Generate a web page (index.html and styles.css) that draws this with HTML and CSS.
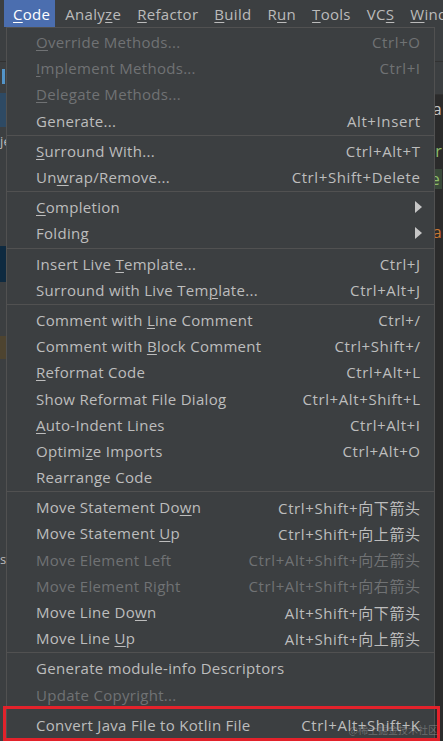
FILE: index.html
```html
<!DOCTYPE html>
<html lang="en">
<head>
<meta charset="utf-8">
<title>Code menu</title>
<link rel="stylesheet" href="styles.css">
</head>
<body>
<div class="ide">
  <div class="menubar">
    <span class="mb-item active"><u>C</u>ode</span>
    <span class="mb-item">Analy<u>z</u>e</span>
    <span class="mb-item"><u>R</u>efactor</span>
    <span class="mb-item"><u>B</u>uild</span>
    <span class="mb-item">R<u>u</u>n</span>
    <span class="mb-item"><u>T</u>ools</span>
    <span class="mb-item">VC<u>S</u></span>
    <span class="mb-item"><u>W</u>indow</span>
  </div>
  <div class="workspace">
    <div class="project">
      <div class="toolbar"></div>
      <div class="proj-body">
        <div class="scroll-mark"></div>
        <div class="proj-sel"></div>
        <div class="proj-text">je</div>
        <div class="proj-nav"></div>
        <div class="proj-warn"></div>
        <div class="proj-s">s</div>
      </div>
    </div>
    <div class="editor">
      <div class="toolbar"></div>
      <div class="tabbar"></div>
      <div class="code">
        <div class="cl l1">Va</div>
        <div class="cl l2">r</div>
        <div class="cl l3"><span class="hl">e</span></div>
        <div class="cl l4">a</div>
      </div>
    </div>
  </div>

  <div class="popup">
    <div class="row dis"><span class="lbl"><u>O</u>verride Methods...</span><span class="sc">Ctrl+O</span></div>
    <div class="row dis"><span class="lbl"><u>I</u>mplement Methods...</span><span class="sc">Ctrl+I</span></div>
    <div class="row dis"><span class="lbl"><u>D</u>elegate Methods...</span><span class="sc"></span></div>
    <div class="row"><span class="lbl">Generate...</span><span class="sc">Alt+Insert</span></div>
    <div class="sep"></div>
    <div class="row"><span class="lbl"><u>S</u>urround With...</span><span class="sc">Ctrl+Alt+T</span></div>
    <div class="row"><span class="lbl">Un<u>w</u>rap/Remove...</span><span class="sc">Ctrl+Shift+Delete</span></div>
    <div class="sep"></div>
    <div class="row"><span class="lbl"><u>C</u>ompletion</span><span class="arrow"></span></div>
    <div class="row"><span class="lbl">Folding</span><span class="arrow"></span></div>
    <div class="sep"></div>
    <div class="row"><span class="lbl">Insert Live <u>T</u>emplate...</span><span class="sc">Ctrl+J</span></div>
    <div class="row"><span class="lbl">Surround with Live Tem<u>p</u>late...</span><span class="sc">Ctrl+Alt+J</span></div>
    <div class="sep"></div>
    <div class="row"><span class="lbl">Comment with <u>L</u>ine Comment</span><span class="sc">Ctrl+/</span></div>
    <div class="row"><span class="lbl">Comment with <u>B</u>lock Comment</span><span class="sc">Ctrl+Shift+/</span></div>
    <div class="row"><span class="lbl"><u>R</u>eformat Code</span><span class="sc">Ctrl+Alt+L</span></div>
    <div class="row"><span class="lbl">Show Reformat File Dialog</span><span class="sc">Ctrl+Alt+Shift+L</span></div>
    <div class="row"><span class="lbl"><u>A</u>uto-Indent Lines</span><span class="sc">Ctrl+Alt+I</span></div>
    <div class="row"><span class="lbl">Optimi<u>z</u>e Imports</span><span class="sc">Ctrl+Alt+O</span></div>
    <div class="row"><span class="lbl">Rearrange Code</span><span class="sc"></span></div>
    <div class="sep"></div>
    <div class="row"><span class="lbl">Move Statement Do<u>w</u>n</span><span class="sc">Ctrl+Shift+向下箭头</span></div>
    <div class="row"><span class="lbl">Move Statement <u>U</u>p</span><span class="sc">Ctrl+Shift+向上箭头</span></div>
    <div class="row dis"><span class="lbl">Move Element Left</span><span class="sc">Ctrl+Alt+Shift+向左箭头</span></div>
    <div class="row dis"><span class="lbl">Move Element Right</span><span class="sc">Ctrl+Alt+Shift+向右箭头</span></div>
    <div class="row"><span class="lbl">Move Line Do<u>w</u>n</span><span class="sc">Alt+Shift+向下箭头</span></div>
    <div class="row"><span class="lbl">Move Line <u>U</u>p</span><span class="sc">Alt+Shift+向上箭头</span></div>
    <div class="sep"></div>
    <div class="row"><span class="lbl">Generate module-info Descriptors</span><span class="sc"></span></div>
    <div class="row dis"><span class="lbl">Update Copyright...</span><span class="sc"></span></div>
    <div class="row last"><span class="lbl">Convert Java File to Kotlin File</span><span class="sc">Ctrl+Alt+Shift+K</span></div>
  </div>

  <div class="annotation"></div>
  <div class="watermark">@稀土掘金技术社区</div>
</div>
</body>
</html>
```

FILE: styles.css
```css
* { box-sizing: border-box; }
html, body { margin: 0; padding: 0; }
body {
  width: 443px;
  height: 741px;
  overflow: hidden;
  background: #2b2b2b;
  font-family: "Open Sans", "Noto Sans CJK SC", sans-serif;
  font-size: 15px;
  letter-spacing: 0.3px;
  color: #bbbbbb;
}
.ide {
  position: relative;
  width: 443px;
  height: 741px;
  display: flex;
  flex-direction: column;
}
u { text-decoration: underline; text-underline-offset: 2px; text-decoration-thickness: 1px; }

/* menu bar */
.menubar {
  height: 27px;
  flex: none;
  display: flex;
  align-items: stretch;
  padding-left: 4px;
  background: #3c3f41;
  white-space: nowrap;
  overflow: hidden;
}
.mb-item {
  flex: none;
  display: flex;
  align-items: center;
  padding: 0 8px 0 8px;
  color: #bbbbbb;
}
.mb-item.active {
  background: #4b6eaf;
  color: #ffffff;
  padding: 0 5px 0 9px;
  margin-right: 2px;
}

/* backdrop */
.workspace { flex: 1; display: flex; min-height: 0; }
.toolbar { height: 35px; background: #3c3f41; border-bottom: 1px solid #323232; }
.project { width: 220px; background: #3c3f41; display: flex; flex-direction: column; }
.proj-body { position: relative; flex: 1; font-size: 13px; color: #bbbbbb; }
.scroll-mark { margin: 7px 0 0 2px; width: 3px; height: 15px; background: #5394c8; }
.proj-sel { margin-top: 9px; height: 34px; background: #2e4a64; }
.proj-text { margin-top: 4px; height: 20px; line-height: 20px; }
.proj-nav { margin-top: 95px; height: 36px; background: #0e2a40; }
.proj-warn { margin-top: 54px; height: 23px; background: #4e4430; }
.proj-s { margin-top: 190px; height: 20px; line-height: 20px; }

.editor { flex: 1; background: #2b2b2b; display: flex; flex-direction: column; }
.tabbar { height: 33px; background: #3c3f41; border-bottom: 1px solid #323232; }
.code { font-size: 16px; }
.cl { display: flex; justify-content: flex-end; padding-right: 1px; height: 20px; line-height: 20px; }
.l1 { margin-top: 4px; color: #c8c8c8; }
.l2 { margin-top: 22px; color: #8fbf6a; }
.l3 { margin-top: 8px; }
.l3 .hl { background: #3a4a3a; color: #8fbf6a; padding: 0 2px 0 4px; }
.l4 { margin-top: 33px; color: #cc7832; }

/* popup menu (overlay) */
.popup {
  position: absolute;
  left: 6px;
  top: 27px;
  width: 429px;
  background: #3c3f41;
  border: 1px solid #515151;
  border-bottom: none;
  padding-top: 1px;
  display: flex;
  flex-direction: column;
}
.row {
  height: 26.2px;
  display: flex;
  align-items: center;
  justify-content: space-between;
  padding: 0 14px 0 29px;
  white-space: nowrap;
  color: #bdbdbd;
}
.row.dis { color: #707274; }
.row.last { height: 33px; padding-top: 1px; }
.sc { color: inherit; letter-spacing: 0.6px; margin-right: -0.6px; }
.arrow {
  width: 0; height: 0;
  margin-right: -2px;
  border-top: 6px solid transparent;
  border-bottom: 6px solid transparent;
  border-left: 7px solid #c6c6c6;
}
.sep {
  height: 1px;
  margin: 1px 0 2px;
  background: #515151;
}

/* annotation + watermark overlays */
.annotation {
  position: absolute;
  left: 3px;
  top: 706px;
  width: 437px;
  height: 35px;
  border: 3px solid #e3222b;
}
.watermark {
  position: absolute;
  right: 5px;
  bottom: 4px;
  font-size: 10px;
  letter-spacing: 0;
  font-family: "Noto Sans CJK SC", sans-serif;
  color: rgba(200, 200, 200, 0.35);
}
```
